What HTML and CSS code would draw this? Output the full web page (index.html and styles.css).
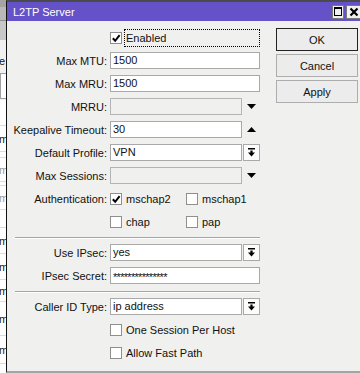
FILE: index.html
```html
<!DOCTYPE html>
<html lang="en">
<head>
  <meta charset="UTF-8">
  <title>L2TP Server</title>
  <link rel="stylesheet" href="styles.css">
</head>
<body>
  <div class="desk">

    <!-- the window underneath, only its right edge is visible -->
    <div class="behind">
      <div class="bh-title"></div>
      <div class="bh-tabs"></div>
      <div class="bh-pad"></div>
      <div class="bh-text">e</div>
      <div class="bh-input"></div>
      <div class="bh-list">
        <div class="bh-row"></div>
        <div class="bh-row">m</div>
        <div class="bh-row"></div>
        <div class="bh-row dim">m</div>
        <div class="bh-row"></div>
        <div class="bh-row dim">m</div>
        <div class="bh-row"></div>
        <div class="bh-row">m</div>
        <div class="bh-row">m</div>
        <div class="bh-row">m</div>
        <div class="bh-row">m</div>
        <div class="bh-row">m</div>
      </div>
    </div>

    <div class="window">
      <div class="titlebar">
        <span class="title">L2TP Server</span>
        <span class="tb-btn max"><span class="max-box"></span></span>
        <span class="tb-btn close">
          <svg width="10" height="10" viewBox="0 0 10 10"><path d="M1.5 1.5 L8.5 8.5 M8.5 1.5 L1.5 8.5" stroke="#000" stroke-width="2.2"/></svg>
        </span>
      </div>

      <div class="body">
        <div class="form">
          <div class="row">
            <span class="label"></span>
            <div class="check">
              <span class="box"><svg width="10" height="10" viewBox="0 0 10 10"><path d="M1.8 5.2 L4.2 7.8 L8.6 2.2" fill="none" stroke="#000" stroke-width="2"/></svg></span>
              <span class="focus">Enabled</span>
            </div>
          </div>

          <div class="row">
            <span class="label">Max MTU:</span>
            <span class="field">1500</span>
          </div>

          <div class="row">
            <span class="label">Max MRU:</span>
            <span class="field">1500</span>
          </div>

          <div class="row">
            <span class="label">MRRU:</span>
            <div class="combo">
              <span class="field off"></span>
              <span class="ctl"><svg width="9" height="5" viewBox="0 0 9 5"><path d="M0 0 H9 L4.5 5 Z" fill="#000"/></svg></span>
            </div>
          </div>

          <div class="row">
            <span class="label">Keepalive Timeout:</span>
            <div class="combo">
              <span class="field">30</span>
              <span class="ctl"><svg width="9" height="5" viewBox="0 0 9 5"><path d="M0 5 H9 L4.5 0 Z" fill="#000"/></svg></span>
            </div>
          </div>

          <div class="row">
            <span class="label">Default Profile:</span>
            <div class="combo">
              <span class="field">VPN</span>
              <span class="ctl drop"><svg width="7" height="9" viewBox="0 0 7 9"><path d="M0 0 H7 V1.4 H0 Z M2.4 2.6 H4.6 V4.6 H7 L3.5 8.6 L0 4.6 H2.4 Z" fill="#000"/></svg></span>
            </div>
          </div>

          <div class="row">
            <span class="label">Max Sessions:</span>
            <div class="combo">
              <span class="field off"></span>
              <span class="ctl"><svg width="9" height="5" viewBox="0 0 9 5"><path d="M0 0 H9 L4.5 5 Z" fill="#000"/></svg></span>
            </div>
          </div>

          <div class="row">
            <span class="label">Authentication:</span>
            <div class="opts">
              <div class="check opt">
                <span class="box"><svg width="10" height="10" viewBox="0 0 10 10"><path d="M1.8 5.2 L4.2 7.8 L8.6 2.2" fill="none" stroke="#000" stroke-width="2"/></svg></span>
                <span>mschap2</span>
              </div>
              <div class="check">
                <span class="box"></span>
                <span>mschap1</span>
              </div>
            </div>
          </div>

          <div class="row">
            <span class="label"></span>
            <div class="opts">
              <div class="check opt">
                <span class="box"></span>
                <span>chap</span>
              </div>
              <div class="check">
                <span class="box"></span>
                <span>pap</span>
              </div>
            </div>
          </div>

          <div class="sep"></div>

          <div class="row">
            <span class="label">Use IPsec:</span>
            <div class="combo">
              <span class="field">yes</span>
              <span class="ctl drop"><svg width="7" height="9" viewBox="0 0 7 9"><path d="M0 0 H7 V1.4 H0 Z M2.4 2.6 H4.6 V4.6 H7 L3.5 8.6 L0 4.6 H2.4 Z" fill="#000"/></svg></span>
            </div>
          </div>

          <div class="row">
            <span class="label">IPsec Secret:</span>
            <span class="field secret">***************</span>
          </div>

          <div class="sep"></div>

          <div class="row">
            <span class="label">Caller ID Type:</span>
            <div class="combo">
              <span class="field">ip address</span>
              <span class="ctl drop"><svg width="7" height="9" viewBox="0 0 7 9"><path d="M0 0 H7 V1.4 H0 Z M2.4 2.6 H4.6 V4.6 H7 L3.5 8.6 L0 4.6 H2.4 Z" fill="#000"/></svg></span>
            </div>
          </div>

          <div class="row">
            <span class="label"></span>
            <div class="check">
              <span class="box"></span>
              <span>One Session Per Host</span>
            </div>
          </div>

          <div class="row">
            <span class="label"></span>
            <div class="check">
              <span class="box"></span>
              <span>Allow Fast Path</span>
            </div>
          </div>
        </div>

        <div class="buttons">
          <button class="btn default">OK</button>
          <button class="btn">Cancel</button>
          <button class="btn">Apply</button>
        </div>
      </div>
    </div>
  </div>
</body>
</html>
```

FILE: styles.css
```css
* {
  box-sizing: border-box;
}

html, body {
  margin: 0;
  height: 373px;
  overflow: hidden;
}

body {
  font-family: 'Liberation Sans', Arial, sans-serif;
  font-size: 11px;
  color: #111;
  background: #fff;
}

.desk {
  display: flex;
  height: 373px;
}

/* window behind */

.behind {
  width: 6px;
  flex: none;
  overflow: hidden;
  background: #fff;
}

.bh-title {
  height: 20px;
  background: #b9b9b9;
  border-top: 7px solid #a4a4a4;
}

.bh-tabs {
  height: 20px;
  background: #c8c8c8;
  border-top: 1px solid #8c8c8c;
}

.bh-pad {
  height: 12px;
  background: #f0f0f0;
}

.bh-text {
  height: 18px;
  line-height: 18px;
  background: #f0f0f0;
  text-indent: -1px;
}

.bh-input {
  height: 30px;
  background: #f0f0f0;
  padding: 3px 0;
}

.bh-input::before {
  content: "";
  display: block;
  height: 24px;
  background: #fff;
  border: 1px solid #a0a0a0;
  border-right: none;
}

.bh-list {
  display: grid;
  grid-template-rows: 26px 26px 6px 24px 4px 24px 18px 26px 26px 22px 34px 28px;
}

.bh-row {
  border-bottom: 1px solid #dcdcdc;
  display: flex;
  align-items: center;
  text-indent: -1px;
  color: #222;
}

.bh-row.dim {
  color: #9a9a9a;
}

/* dialog */

.window {
  flex: 1;
  display: flex;
  flex-direction: column;
  background: #f0f0ee;
  border-top: 2px solid #4b4b4b;
  border-left: 1px solid #111;
  border-bottom: 2px solid #a3a3a3;
}

.titlebar {
  height: 19px;
  flex: none;
  display: flex;
  align-items: center;
  background: #6652c8;
  color: #fff;
}

.title {
  flex: 1;
  padding-left: 6px;
  font-size: 11px;
}

.tb-btn {
  height: 14px;
  display: flex;
  align-items: center;
  justify-content: center;
  background: #f0f0f0;
  border: 1px solid #7a7a7a;
}

.tb-btn.max {
  width: 12px;
  margin-right: 2px;
}

.max-box {
  width: 8px;
  height: 9px;
  border: 1px solid #000;
  border-top-width: 2px;
}

.tb-btn.close {
  width: 15px;
  margin-right: -1px;
  flex: none;
  justify-content: flex-start;
  padding-left: 2px;
}

.body {
  flex: 1;
  display: flex;
  padding-top: 5px;
}

.form {
  width: 253px;
  flex: none;
}

.row {
  display: grid;
  grid-template-columns: 100px 150px;
  column-gap: 3px;
  height: 23px;
  align-items: center;
}

.label {
  text-align: right;
  white-space: nowrap;
}

.field {
  display: block;
  height: 17px;
  line-height: 15px;
  padding: 0 2px;
  background: #fff;
  border: 1px solid #a9a9a9;
  white-space: nowrap;
  overflow: hidden;
}

.field.off {
  background: #f0f0ee;
  border-color: #b4b4b4;
}

.field.secret {
  letter-spacing: -0.7px;
  line-height: 19px;
}

.combo {
  display: flex;
  gap: 1px;
}

.combo .field {
  flex: 1;
}

.ctl {
  width: 17px;
  height: 17px;
  flex: none;
  display: flex;
  align-items: center;
  justify-content: center;
}

.ctl.drop {
  background: #fcfcfc;
  border: 1px solid #a9a9a9;
}

.check {
  display: flex;
  align-items: center;
  white-space: nowrap;
}

.box {
  width: 12px;
  height: 12px;
  flex: none;
  margin-right: 4px;
  display: flex;
  align-items: center;
  justify-content: center;
  background: #fff;
  border: 1px solid #8f8f8f;
}

.focus {
  flex: 1;
  height: 18px;
  line-height: 16px;
  margin-left: -2px;
  padding-left: 1px;
  border: 1px dotted #000;
}

.opts {
  display: flex;
}

.opt {
  width: 76px;
}

.sep {
  width: 245px;
  margin: 4px 0 2px 8px;
  border-top: 1px solid #a6a6a6;
  border-bottom: 1px solid #fff;
}

.buttons {
  margin-left: 16px;
  padding-top: 2px;
  display: flex;
  flex-direction: column;
  gap: 3px;
}

.btn {
  width: 82px;
  height: 23px;
  padding: 0;
  font-family: 'Liberation Sans', Arial, sans-serif;
  font-size: 11px;
  color: #111;
  background: #ececec;
  border: 1px solid #adadad;
}

.btn.default {
  border-color: #222;
}
```
